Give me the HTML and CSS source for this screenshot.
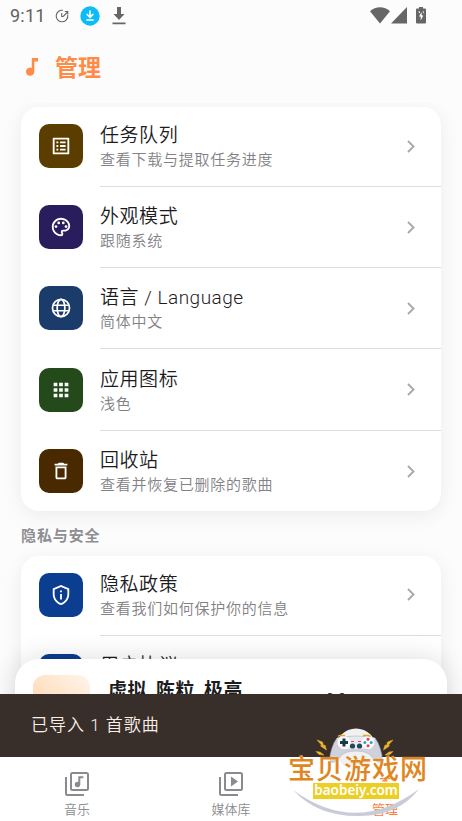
FILE: index.html
```html
<!DOCTYPE html>
<html lang="zh-CN">
<head>
<meta charset="utf-8">
<title>管理</title>
<link rel="stylesheet" href="styles.css">
</head>
<body>
<div class="phone">
  <header class="status">
    <span class="clock">9:11</span>
    <svg class="s-sync" width="14" height="14" viewBox="0 0 14 14" fill="none" stroke="#666" stroke-width="1.1"><path d="M8 1.300A5.800 5.800 0 1 0 12.700 6M6.700 4v3.500h1.500L12.600 3M9.800 2.500h3v3"/></svg>
    <svg class="s-app" width="20" height="20" viewBox="0 0 20 20"><circle cx="10" cy="10" r="9.7" fill="#0bbcf8"/><path d="M10 4.500v6.500M6.700 8l3.300 3.300L13.300 8M6.300 14h7.400" fill="none" stroke="#fff" stroke-width="1.700"/></svg>
    <svg class="s-down" width="14" height="18" viewBox="0 0 14 18" fill="#666"><path d="M5 0h4v7h3.500L7 13 1.500 7H5zM.5 15.500h13v1.700H.5z"/></svg>
    <span class="spacer"></span>
    <svg width="20" height="17" viewBox="0 0 20 17" fill="#666"><path d="M0 4.300C5.500-1.100 14.500-1.100 20 4.300L10 16.500z"/></svg>
    <svg class="s-cell" width="16" height="17" viewBox="0 0 16 17" fill="#666"><path d="M16 0v16.500H0z"/></svg>
    <svg class="s-batt" width="10" height="17" viewBox="0 0 10 17"><path d="M3 0h4v1.500h2q1 0 1 1v13q0 1-1 1H1q-1 0-1-1v-13q0-1 1-1h2z" fill="#666"/><path d="M5.700 5 3 9.500h1.700v4L7.300 8.500H5.700zM2 4.500h2v2zM8 4.500H6.500l1.500 2z" fill="#fff"/></svg>
  </header>
  <div class="heading">
    <svg width="12" height="18" viewBox="0 0 12 18"><path d="M5.800 0h6.200v3.500H8.300v10.200A4.150 4.150 0 1 1 5.800 9.900z" fill="#ff8b46"/></svg>
    <h1>管理</h1>
  </div>
  <main class="content">
    <section class="card">
      <div class="row">
        <div class="tile brown"><svg viewBox="0 0 24 24"><path d="M11 7h6v2h-6zm0 4h6v2h-6zm0 4h6v2h-6zM7 7h2v2H7zm0 4h2v2H7zm0 4h2v2H7zM20.100 3H3.900c-.5 0-.9.400-.9.900v16.200c0 .4.400.9.900.9h16.200c.4 0 .9-.5.900-.9V3.900c0-.5-.5-.9-.9-.9zM19 19H5V5h14v14z"/></svg></div>
        <div class="body"><div class="text"><h2>任务队列</h2><p>查看下载与提取任务进度</p></div><svg class="chev" viewBox="0 0 8 13"><path d="m1 1 5.500 5.500L1 12"/></svg></div>
      </div>
      <div class="row">
        <div class="tile purple"><svg viewBox="0 0 24 24"><path d="M12 22C6.490 22 2 17.510 2 12S6.490 2 12 2s10 4.040 10 9c0 3.310-2.690 6-6 6h-1.770c-.28 0-.5.220-.5.500 0 .12.050.23.130.33.410.47.640 1.060.640 1.670A2.500 2.500 0 0 1 12 22zm0-18c-4.410 0-8 3.590-8 8s3.590 8 8 8c.28 0 .5-.22.500-.5a.54.54 0 0 0-.14-.35c-.41-.46-.63-1.050-.63-1.650a2.500 2.500 0 0 1 2.500-2.500H16c2.210 0 4-1.790 4-4 0-3.860-3.590-7-8-7z"/><circle cx="6.500" cy="11.500" r="1.500"/><circle cx="9.500" cy="7.500" r="1.500"/><circle cx="14.500" cy="7.500" r="1.500"/><circle cx="17.500" cy="11.500" r="1.500"/></svg></div>
        <div class="body"><div class="text"><h2>外观模式</h2><p>跟随系统</p></div><svg class="chev" viewBox="0 0 8 13"><path d="m1 1 5.500 5.500L1 12"/></svg></div>
      </div>
      <div class="row">
        <div class="tile navy"><svg viewBox="0 0 24 24"><g fill="none" stroke="#fff" stroke-width="1.900"><circle cx="12" cy="12" r="9.300"/><ellipse cx="12" cy="12" rx="4.200" ry="9.300"/><path d="M3.600 9h16.800M3.600 15h16.800"/></g></svg></div>
        <div class="body"><div class="text"><h2>语言 <span class="latin">/ Language</span></h2><p>简体中文</p></div><svg class="chev" viewBox="0 0 8 13"><path d="m1 1 5.500 5.500L1 12"/></svg></div>
      </div>
      <div class="row">
        <div class="tile green"><svg viewBox="0 0 24 24"><path d="M4 8h4V4H4v4zm6 12h4v-4h-4v4zm-6 0h4v-4H4v4zm0-6h4v-4H4v4zm6 0h4v-4h-4v4zm6-10v4h4V4h-4zm-6 4h4V4h-4v4zm6 6h4v-4h-4v4zm0 6h4v-4h-4v4z"/></svg></div>
        <div class="body"><div class="text"><h2>应用图标</h2><p>浅色</p></div><svg class="chev" viewBox="0 0 8 13"><path d="m1 1 5.500 5.500L1 12"/></svg></div>
      </div>
      <div class="row">
        <div class="tile umber"><svg viewBox="0 0 24 24"><path d="M6 19c0 1.100.9 2 2 2h8c1.100 0 2-.9 2-2V7H6v12zM8 9h8v10H8V9zm7.500-5-1-1h-5l-1 1H5v2h14V4h-3.500z"/></svg></div>
        <div class="body"><div class="text"><h2>回收站</h2><p>查看并恢复已删除的歌曲</p></div><svg class="chev" viewBox="0 0 8 13"><path d="m1 1 5.500 5.500L1 12"/></svg></div>
      </div>
    </section>
    <h3 class="section">隐私与安全</h3>
    <section class="card">
      <div class="row">
        <div class="tile blue"><svg viewBox="0 0 24 24"><path d="M12 1 3 5v6c0 5.550 3.840 10.740 9 12 5.160-1.260 9-6.450 9-12V5l-9-4zm7 10c0 4.520-2.980 8.690-7 9.930-4.020-1.240-7-5.410-7-9.930V6.300l7-3.110 7 3.110V11zM11 11h2v6h-2zm0-4h2v2h-2z"/></svg></div>
        <div class="body"><div class="text"><h2>隐私政策</h2><p>查看我们如何保护你的信息</p></div><svg class="chev" viewBox="0 0 8 13"><path d="m1 1 5.500 5.500L1 12"/></svg></div>
      </div>
      <div class="row">
        <div class="tile blue"></div>
        <div class="body"><div class="text"><h2>用户协议</h2></div></div>
      </div>
    </section>
    <div class="player">
      <div class="cover"></div>
      <strong>虚拟_陈粒_极高</strong>
      <svg class="pause" width="18" height="20" viewBox="0 0 18 20" fill="#202124"><rect width="6" height="20" rx="3"/><rect x="12" width="6" height="20" rx="3"/></svg>
    </div>
  </main>
  <div class="snackbar">已导入 1 首歌曲</div>
  <nav class="tabs">
    <div class="tab"><svg width="24" height="24" viewBox="0 0 24 24" fill="none" stroke="#8b8b8f" stroke-width="2"><rect x="6" y="1" width="17" height="17" rx="1.500"/><path d="M1 5v16.500Q1 23 2.500 23H19"/><circle cx="12.500" cy="12.500" r="2.700" fill="#8b8b8f" stroke="none"/><path d="M14.300 12.500V5.300h4"/></svg><span>音乐</span></div>
    <div class="tab"><svg width="24" height="24" viewBox="0 0 24 24" fill="none" stroke="#8b8b8f" stroke-width="2"><rect x="6" y="1" width="17" height="17" rx="1.500"/><path d="M1 5v16.500Q1 23 2.500 23H19"/><path d="m12 4.500 7 5-7 5z" fill="#8b8b8f" stroke="none"/></svg><span>媒体库</span></div>
    <div class="tab active"><svg width="24" height="24" viewBox="0 0 24 24" fill="#ff7d38"><path d="M7 6h10v1.200H7zM9.500 8h2V6h1v2h2v1.500h-5zM10.500 11h3v1.500h-3z"/></svg><span>管理</span></div>
  </nav>
  <div class="badge">
    <svg class="pad" width="144" height="92" viewBox="0 0 144 92">
      <path d="M7 62Q70 108 133 61Q112 88 74 88Q32 89 7 62z" fill="#c9cbd9"/>
      <circle cx="70" cy="21" r="20.500" fill="#f1f1f2"/>
      <path d="M51 10Q70 6 89 10L92 15Q98 29 95 34Q91 36 86 29Q82 23 70 23Q58 23 54 29Q49 36 45 34Q42 29 48 15z" fill="#cfd1dc" stroke="#b4b6c3" stroke-width=".6"/>
      <path d="M51 10Q70 7 89 10L85 21H55z" fill="#e8e9ee"/>
      <circle cx="58" cy="14.500" r="6.500" fill="#fafafa"/><circle cx="82" cy="14.500" r="6.500" fill="#fafafa"/>
      <path d="M58 10.500v8M54 14.500h8" stroke="#173a4b" stroke-width="3"/>
      <circle cx="82" cy="11.300" r="1.500" fill="#df4254"/><circle cx="82" cy="17.700" r="1.500" fill="#df4254"/><circle cx="78.800" cy="14.500" r="1.500" fill="#22a8c8"/><circle cx="85.200" cy="14.500" r="1.500" fill="#22a8c8"/>
      <circle cx="66.500" cy="18" r="2.600" fill="#264858"/><circle cx="73.500" cy="18" r="2.600" fill="#264858"/>
      <path d="M65 13.500h3M72 13.500h3" stroke="#d94e5b"/>
      <path d="m52 8.500 1.500-1H59M77 7.500h5.500l2 1" fill="none" stroke="#dda923" stroke-width="1.500"/>
      <path d="m31 12 5.500 2 1 3.500 1.500-.5 1.500 5-6-4 1-1zM107 12l-5.500 2-1 3.500-1.500-.5-1.500 5 6-4-1-1zM30 23.500l4 .5 4 3-5-.5zM107 23.500l-4 .5-4 3 5-.5z" fill="#eeb52e" stroke="#eeb52e" stroke-width=".5"/>
    </svg>
    <div class="brand">宝贝游戏网</div>
    <div class="domain">baobeiy.com</div>
  </div>
</div>
</body>
</html>
```
FILE: styles.css
```css
* { box-sizing: border-box; }
body { margin: 0; background: #fcfcfc; font-family: Roboto, "Noto Sans CJK SC", sans-serif; }
h1, h2, h3, p { margin: 0; }
svg { display: block; flex: none; }
.phone { position: relative; width: 462px; height: 821px; overflow: hidden; display: flex; flex-direction: column; }

.status { height: 31px; flex: none; display: flex; align-items: center; padding: 0 36px 0 10px; }
.clock { width: 45px; color: #626262; font-size: 18px; line-height: 31px; letter-spacing: .2px; }
.s-app { margin-left: 11px; }
.s-down { margin-left: 12px; }
.spacer { flex: 1; }
.s-cell { margin-left: 1px; }
.s-batt { margin: -1px 0 0 9px; }

.heading { height: 72px; flex: none; display: flex; align-items: center; gap: 17px; padding: 3px 26px 0; color: #ff8b46; }
.heading svg { margin-top: -3px; }
.heading h1 { font-size: 23px; line-height: 32px; font-weight: 700; }

.content { position: relative; height: 591px; flex: none; overflow: hidden; padding: 4px 21px 0; }
.card { background: #fff; border-radius: 18px; box-shadow: 0 4px 20px rgba(0, 0, 0, .07); }
.row { height: 81.200px; display: flex; align-items: stretch; padding-left: 17.500px; }
.card .row:last-child { height: 79px; }
.tile { width: 44px; height: 44px; margin-top: 17px; border-radius: 10px; display: flex; align-items: center; justify-content: center; }
.tile svg { width: 22px; height: 22px; fill: #fff; }
.brown { background: #5b3d00; }
.purple { background: #2a1d5e; }
.navy { background: #1b3b6b; }
.green { background: #244a1c; }
.umber { background: #482900; }
.blue { background: #0b3d91; }
.body { flex: 1; height: 80px; margin-left: 17.500px; padding-right: 26px; display: flex; align-items: center; justify-content: space-between; border-bottom: 1px solid #dedede; }
.row:last-child .body { border-bottom: 0; }
.text { height: 49px; }
.text h2 { color: #1c1c1e; font-size: 19px; line-height: 27px; font-weight: 350; letter-spacing: .55px; white-space: nowrap; }
.latin { font-weight: 350; letter-spacing: .5px; }
.text p { color: #818186; font-size: 15px; line-height: 22px; font-weight: 350; letter-spacing: .75px; white-space: nowrap; }
.chev { width: 8px; height: 13px; margin-top: -1px; fill: none; stroke: #a9a9ac; stroke-width: 1.900; }
.section { height: 45px; color: #8e8e93; font-size: 15px; line-height: 50px; font-weight: 700; letter-spacing: .9px; }

.player { position: absolute; left: 15px; top: 556px; width: 432px; height: 90px; padding: 16px 18px; display: flex; align-items: flex-start; border-radius: 24px; background: #fff; box-shadow: 0 0 28px rgba(0, 0, 0, .14); }
.cover { width: 57px; height: 57px; border-radius: 12px; background: linear-gradient(45deg, #ffd3a3, #fff4ec); }
.player strong { margin: 2px 0 0 18px; font-size: 19px; line-height: 28px; letter-spacing: .5px; color: #1c1c1e; white-space: nowrap; }
.pause { margin: 17.500px 84px 0 auto; }

.snackbar { height: 63px; flex: none; padding-left: 31px; color: #fbeee8; background: #382e2a; font-size: 17px; line-height: 62px; letter-spacing: 1px; font-weight: 350; }
.tabs { height: 64px; flex: none; display: flex; background: #fff; }
.tab { flex: 1; display: flex; flex-direction: column; align-items: center; padding-top: 15px; color: #8b8b8f; font-size: 13px; line-height: 18px; font-weight: 350; }
.tab span { margin-top: 5px; }
.tab.active { color: #ff7d38; font-weight: 400; }

.badge { position: absolute; left: 286px; top: 728px; width: 144px; height: 92px; }
.pad { position: absolute; left: 0; top: 0; }
.brand { position: absolute; left: 2px; top: 29px; color: #e1851d; font-size: 27px; line-height: 27px; letter-spacing: 1px; font-weight: 500; white-space: nowrap; text-shadow: 0 0 1px #fff; }
.domain { position: absolute; left: 27px; top: 55px; width: 86px; height: 16px; color: #fff; background: #edce24; font: 600 13.500px/14px "Noto Sans", sans-serif; text-align: center; }
```
